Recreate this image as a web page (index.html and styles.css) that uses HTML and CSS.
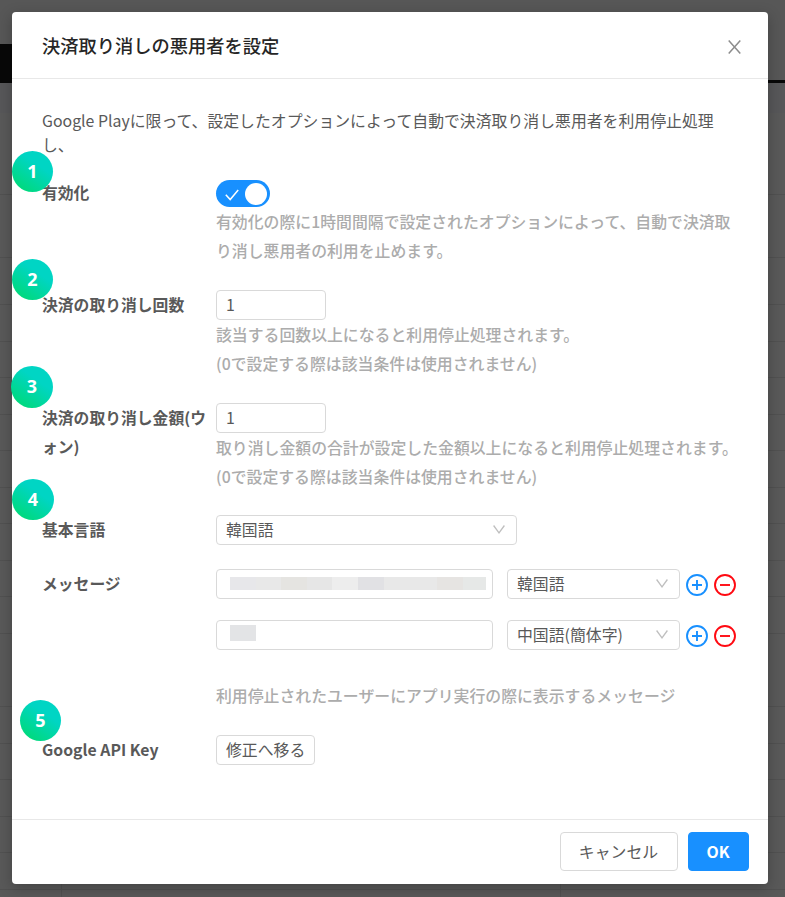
FILE: index.html
```html
<!DOCTYPE html>
<html lang="ja">
<head>
<meta charset="utf-8">
<title>決済取り消しの悪用者を設定</title>
<link rel="stylesheet" href="styles.css">
</head>
<body>
<svg class="defs" width="0" height="0">
  <symbol id="plus" viewBox="0 0 22 22"><circle cx="11" cy="11" r="10"/><path d="M6 11h10M11 6v10"/></symbol>
  <symbol id="minus" viewBox="0 0 22 22"><circle cx="11" cy="11" r="10"/><path d="M6 11h10"/></symbol>
  <symbol id="down" viewBox="0 0 12 9"><path d="M.6.5 6 7.8 11.4.5"/></symbol>
</svg>
<div class="backdrop">
  <div class="top"><span class="tab"></span><span class="rule"></span></div>
  <div class="thead"></div>
  <div class="row first"></div>
  <div class="row second"></div>
  <div class="row third"></div>
  <div class="rows"></div>
</div>
<main class="modal">
  <header class="head">
    <h1>決済取り消しの悪用者を設定</h1>
    <svg class="close" viewBox="0 0 13 14"><path d="M.7.5 12.3 13.5M12.3.5.7 13.5"/></svg>
  </header>
  <section class="body">
    <p class="intro">Google Playに限って、設定したオプションによって自動で決済取り消し悪用者を利用停止処理<br>し、</p>
    <div class="form">
      <div class="label">有効化</div>
      <div>
        <div class="switch"><svg viewBox="0 0 14 12"><path d="M.8 5.7 5.2 10.6 13.2 1"/></svg><i></i></div>
        <p class="help">有効化の際に1時間間隔で設定されたオプションによって、自動で決済取<br>り消し悪用者の利用を止めます。</p>
      </div>
      <div class="label">決済の取り消し回数</div>
      <div>
        <div class="box num">1</div>
        <p class="help">該当する回数以上になると利用停止処理されます。<br>(0で設定する際は該当条件は使用されません)</p>
      </div>
      <div class="label">決済の取り消し金額(ウ<br>ォン)</div>
      <div>
        <div class="box num">1</div>
        <p class="help">取り消し金額の合計が設定した金額以上になると利用停止処理されます。<br>(0で設定する際は該当条件は使用されません)</p>
      </div>
      <div class="label">基本言語</div>
      <div><div class="box select wide">韓国語<svg><use href="#down"/></svg></div></div>
      <div class="label">メッセージ</div>
      <div>
        <div class="message">
          <div class="box text"><span class="mosaic"></span></div>
          <div class="box select">韓国語<svg><use href="#down"/></svg></div>
          <svg class="icon add"><use href="#plus"/></svg>
          <svg class="icon remove"><use href="#minus"/></svg>
        </div>
        <div class="message">
          <div class="box text"><span class="mosaic short"></span></div>
          <div class="box select">中国語(簡体字)<svg><use href="#down"/></svg></div>
          <svg class="icon add"><use href="#plus"/></svg>
          <svg class="icon remove"><use href="#minus"/></svg>
        </div>
        <p class="help note">利用停止されたユーザーにアプリ実行の際に表示するメッセージ</p>
      </div>
      <div class="label">Google API Key</div>
      <div><div class="box link">修正へ移る</div></div>
    </div>
  </section>
  <footer class="foot">
    <div class="btn cancel">キャンセル</div>
    <div class="btn ok">OK</div>
  </footer>
  <span class="badge b1">1</span>
  <span class="badge b2">2</span>
  <span class="badge b3">3</span>
  <span class="badge b4">4</span>
  <span class="badge b5">5</span>
</main>
</body>
</html>
```
FILE: styles.css
```css
* { box-sizing: border-box; }
body {
  margin: 0;
  width: 785px;
  height: 897px;
  padding: 12px;
  overflow: hidden;
  position: relative;
  background: #595959;
  font-family: "Noto Sans CJK JP", sans-serif;
  font-size: 15.86px;
  color: #595959;
}
.defs { position: absolute; }
h1, p { margin: 0; }
svg { fill: none; stroke: currentColor; }

.backdrop { position: absolute; inset: 0; }
.top { height: 83px; background: #575757; display: flex; justify-content: space-between; align-items: flex-end; }
.tab { width: 40px; height: 39px; background: #080808; }
.rule { width: 40px; height: 3px; background: #080808; }
.thead { height: 30px; background: #575759; }
.row { border-bottom: 1px solid #515151; }
.first { height: 82px; }
.second { height: 63px; }
.third { height: 47px; }
.rows {
  height: 592px;
  background:
    linear-gradient(#515151, #515151) 61px 0 / 1px 100% no-repeat,
    linear-gradient(#515151, #515151) 560px 0 / 1px 100% no-repeat,
    repeating-linear-gradient(transparent 0 35.55px, #515151 35.55px 36.55px);
}

.modal {
  position: relative;
  width: 756px;
  height: 872px;
  display: flex;
  flex-direction: column;
  background: #fff;
  border-radius: 4px;
  box-shadow: 0 4px 14px rgba(0, 0, 0, .25);
}
.head {
  height: 67px;
  padding: 0 27px 0 30px;
  display: flex;
  align-items: center;
  justify-content: space-between;
  border-bottom: 1px solid #e8e8e8;
}
h1 { font-size: 18.25px; font-weight: 500; color: #262626; line-height: 26px; }
.close { width: 13px; height: 14px; margin-top: 3px; color: #8c8c8c; stroke-width: 1.5; }

.body { flex: 1; padding: 30px 0 0 30px; }
.intro { line-height: 23.7px; white-space: nowrap; }
.form {
  margin-top: 22px;
  display: grid;
  grid-template-columns: 174px 1fr;
  grid-template-rows: 112px 113px 112px 54px 166px 29px;
}
.label { font-size: 15.8px; font-weight: 700; line-height: 29px; white-space: nowrap; }
.help { font-weight: 500; line-height: 29px; color: #acacac; white-space: nowrap; }
.switch {
  width: 54px;
  height: 27px;
  margin: 2px 0 0;
  padding: 0 3px 0 9px;
  display: flex;
  align-items: center;
  justify-content: space-between;
  border-radius: 14px;
  background: #1890ff;
  color: #fff;
}
.switch svg { width: 14px; height: 12px; margin-top: 2px; stroke-width: 1.5; }
.switch i { width: 22px; height: 22px; border-radius: 50%; background: #fff; }
.box {
  height: 30px;
  padding: 0 9px 1px;
  display: flex;
  align-items: center;
  border: 1px solid #d9d9d9;
  border-radius: 4px;
}
.num { width: 110px; }
.select { width: 173px; justify-content: space-between; }
.select.wide { width: 301px; }
.select svg { width: 12px; height: 9px; margin-right: 2px; color: #bfbfbf; stroke-width: 1.3; }
.text { width: 277px; margin-right: 14px; padding: 0 6px 0 13px; }
.message { display: flex; margin-bottom: 21px; }
.mosaic {
  flex: 1;
  height: 13px;
  margin-bottom: 2px;
  background: linear-gradient(90deg, #e7e7ea 0 10%, #e8e8e8 10% 20%, #e5e4e1 20% 30%, #e6e6e6 30% 40%, #ededed 40% 50%, #e1e1e4 50% 60%, #e8e8e8 60% 81%, #e6e4e2 81% 91%, #e6e8e7 91%);
}
.mosaic.short { flex: none; width: 26px; height: 16px; margin-bottom: 4px; background: #e3e4e6; }
.icon { width: 22px; height: 22px; margin: 5px 0 0 6px; stroke-width: 1.9; }
.add { color: #1890ff; }
.remove { color: #ff0a12; }
.note { margin-top: 31px; }
.link { width: 99px; white-space: nowrap; }

.foot {
  height: 65px;
  padding: 12px 19.5px 0;
  display: flex;
  justify-content: flex-end;
  gap: 10px;
  border-top: 1px solid #e8e8e8;
}
.btn {
  width: 118px;
  height: 39px;
  display: flex;
  align-items: center;
  justify-content: center;
  border: 1px solid #d9d9d9;
  border-radius: 4px;
}
.ok { width: 61px; border-color: #1890ff; background: #1890ff; color: #fff; font-weight: 700; }

.badge {
  position: absolute;
  left: 0;
  width: 41px;
  height: 41px;
  border-radius: 50%;
  background: linear-gradient(35deg, #00da72 5%, #00d5c4 65%);
  color: #fff;
  font: bold 18px/41px "Noto Sans", sans-serif;
  text-align: center;
}
.b1 { top: 139px; }
.b2 { top: 247px; }
.b3 { top: 354px; left: -1px; width: 42px; height: 42px; }
.b4 { top: 467px; width: 42px; }
.b5 { top: 688px; left: 8px; }
```
